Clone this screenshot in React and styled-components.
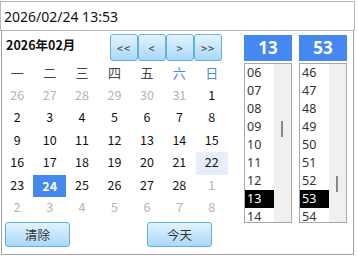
import React from "react";
import styled, { createGlobalStyle } from "styled-components";

const GlobalStyle = createGlobalStyle`
  body {
    margin: 0;
    background: #fff;
    font-family: "Noto Sans", "Noto Sans CJK SC", sans-serif;
    color: #222;
  }
`;

const WEEKDAYS = ["一", "二", "三", "四", "五", "六", "日"];
const ROW_H = 18;
const VISIBLE = 9;

function buildDays(year, month) {
  const first = new Date(year, month - 1, 1);
  const lead = (first.getDay() + 6) % 7;
  const prevLast = new Date(year, month - 1, 0).getDate();
  const last = new Date(year, month, 0).getDate();
  const days = [];
  for (let i = lead; i > 0; i--) days.push({ d: prevLast - i + 1, other: true });
  for (let d = 1; d <= last; d++) days.push({ d, other: false });
  let n = 1;
  while (days.length < 42) days.push({ d: n++, other: true });
  return days;
}

function pad(n) {
  return String(n).padStart(2, "0");
}

// only the rows that show in the scrolled window are drawn
function TimeList({ value, count, first, thumbTop }) {
  const rows = [];
  for (let i = first; i < Math.min(count, first + VISIBLE); i++) rows.push(i);
  return (
    <ListBox>
      <Items>
        {rows.map((i) => (
          <Item key={i} $active={i === value}>
            {pad(i)}
          </Item>
        ))}
      </Items>
      <Track>
        <Thumb style={{ top: thumbTop }} />
      </Track>
    </ListBox>
  );
}

export default function App() {
  const days = buildDays(2026, 2);
  return (
    <>
      <GlobalStyle />
      <Wrap>
        <Input readOnly value="2026/02/24 13:53" />
        <Panel>
          <CalCol>
            <Head>
              <Title>2026年02月</Title>
              <Nav>
                <NavBtn>&lt;&lt;</NavBtn>
                <NavBtn>&lt;</NavBtn>
                <NavBtn>&gt;</NavBtn>
                <NavBtn>&gt;&gt;</NavBtn>
              </Nav>
            </Head>
            <Grid>
              {WEEKDAYS.map((w, i) => (
                <Week key={w} $weekend={i >= 5}>
                  {w}
                </Week>
              ))}
              {days.map((c, i) => (
                <Day
                  key={i}
                  $other={c.other}
                  $selected={!c.other && c.d === 24}
                  $hover={!c.other && c.d === 22}
                >
                  {c.d}
                </Day>
              ))}
            </Grid>
            <Footer>
              <ActionBtn>清除</ActionBtn>
              <ActionBtn>今天</ActionBtn>
            </Footer>
          </CalCol>
          <TimeCol>
            <TimeBox>
              <TimeHead>13</TimeHead>
              <TimeList value={13} count={24} first={6} thumbTop={57} />
            </TimeBox>
            <TimeBox>
              <TimeHead>53</TimeHead>
              <TimeList value={53} count={60} first={46} thumbTop={112} />
            </TimeBox>
          </TimeCol>
        </Panel>
      </Wrap>
    </>
  );
}

const Wrap = styled.div`
  width: 356px;
  padding-top: 1px;
`;

const Input = styled.input`
  display: block;
  box-sizing: border-box;
  width: 355px;
  height: 30px;
  margin: 0;
  padding: 0 3px;
  border: 1px solid #b8b8b8;
  font-family: "Noto Sans", sans-serif;
  font-size: 14px;
  color: #111;
  outline: none;
`;

const Panel = styled.div`
  box-sizing: border-box;
  width: 353px;
  height: 224px;
  margin-left: 1px;
  border: 1px solid #a0a0a0;
  border-top: none;
  display: flex;
  gap: 16px;
`;

const CalCol = styled.div`
  width: 226px;
  display: flex;
  flex-direction: column;
`;

const Head = styled.div`
  display: flex;
  align-items: flex-start;
  justify-content: space-between;
  padding: 3px 6px 0 4px;
  height: 28px;
`;

const Title = styled.div`
  font-family: "Noto Sans CJK SC", sans-serif;
  font-weight: 700;
  font-size: 12.5px;
  line-height: 22px;
  color: #111;
`;

const Nav = styled.div`
  display: flex;
`;

const btnSkin = `
  box-sizing: border-box;
  border: 1px solid #5eb3e4;
  border-radius: 3px;
  background: linear-gradient(#e3f3fe, #a9d8f8);
  color: #333;
  font-family: "Noto Sans CJK SC", sans-serif;
  padding: 0;
`;

const NavBtn = styled.button`
  ${btnSkin}
  width: 28px;
  height: 27px;
  font-size: 11px;
  letter-spacing: 1px;
`;

const Grid = styled.div`
  display: grid;
  grid-template-columns: repeat(7, 1fr);
  grid-auto-rows: 22.5px;
  margin-left: -1px;
`;

const Cell = styled.div`
  display: flex;
  align-items: center;
  justify-content: center;
  padding-bottom: 3px;
  box-sizing: border-box;
  font-family: "Noto Sans CJK SC", sans-serif;
`;

const Week = styled(Cell)`
  font-size: 13px;
  padding-bottom: 1px;
  color: ${(p) => (p.$weekend ? "#4a8af2" : "#444")};
`;

const Day = styled(Cell)`
  font-size: 12.5px;
  color: ${(p) => (p.$selected ? "#fff" : p.$other ? "#b4b4b4" : "#111")};
  font-weight: ${(p) => (p.$selected ? 700 : 400)};
  background: ${(p) => (p.$selected ? "#4488f0" : p.$hover ? "#e7edfb" : "transparent")};
  padding-bottom: ${(p) => (p.$selected ? "0" : "3px")};
`;

const Footer = styled.div`
  display: flex;
  gap: 77px;
  padding: 2px 0 0 3px;
`;

const ActionBtn = styled.button`
  ${btnSkin}
  width: 65px;
  height: 25px;
  font-size: 12.5px;
`;

const TimeCol = styled.div`
  display: flex;
  gap: 7px;
  padding-top: 4px;
`;

const TimeBox = styled.div`
  width: 48px;
  display: flex;
  flex-direction: column;
  gap: 2px;
`;

const TimeHead = styled.div`
  height: 26px;
  background: #4488f0;
  color: #fff;
  font-family: "Noto Sans", sans-serif;
  font-weight: 700;
  font-size: 17px;
  line-height: 26px;
  text-align: center;
`;

const ListBox = styled.div`
  box-sizing: border-box;
  height: 160px;
  border: 1px solid #a8a8a8;
  display: flex;
`;

const Items = styled.div`
  flex: 1;
  overflow: hidden;
`;

const Item = styled.div`
  height: ${ROW_H}px;
  line-height: ${ROW_H}px;
  padding-left: 2px;
  font-family: "Noto Sans", sans-serif;
  font-size: 12.5px;
  color: ${(p) => (p.$active ? "#fff" : "#333")};
  background: ${(p) => (p.$active ? "#000" : "transparent")};
`;

const Track = styled.div`
  position: relative;
  width: 17px;
  background: #f0f0f0;
`;

const Thumb = styled.div`
  position: absolute;
  left: 7px;
  width: 2px;
  height: 16px;
  background: #888;
`;
